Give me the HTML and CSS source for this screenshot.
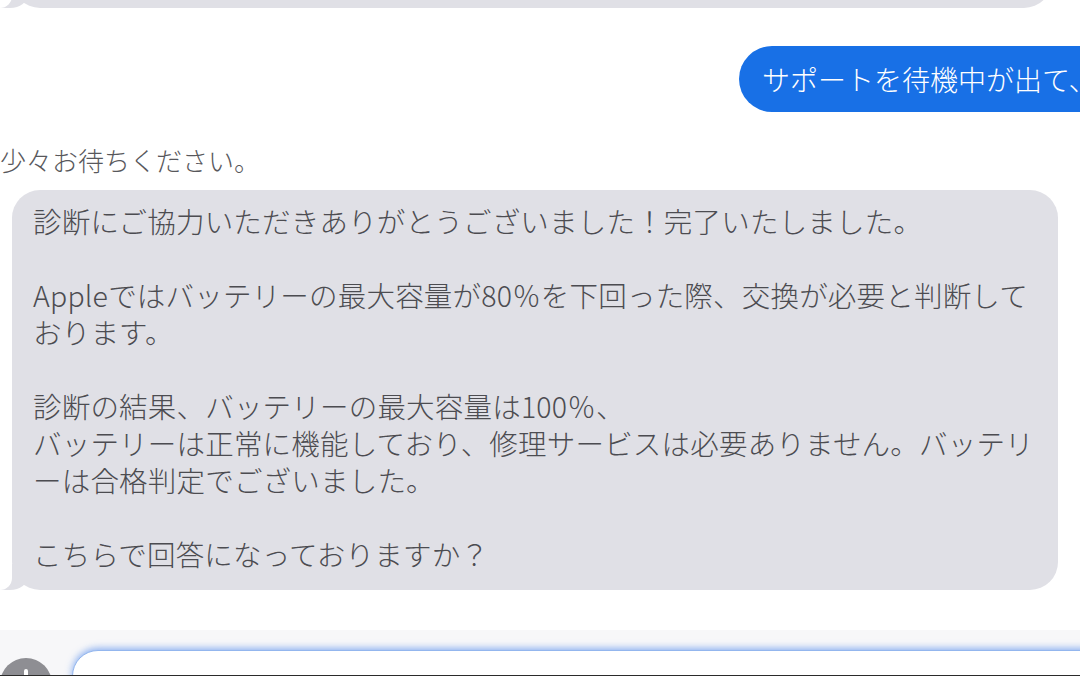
FILE: index.html
```html
<!DOCTYPE html>
<html lang="ja">
<head>
  <meta charset="UTF-8">
  <title>チャット</title>
  <link rel="stylesheet" href="styles.css">
</head>
<body>

<div class="page">
  <div class="bubble bubble-in bubble-prev"></div>

  <div class="out-row">
    <div class="bubble-out">サポートを待機中が出て、</div>
  </div>

  <div class="agent-note">少々お待ちください。</div>

  <div class="bubble bubble-in bubble-main">
    <p>診断にご協力いただきありがとうございました！完了いたしました。</p>
    <p>Appleではバッテリーの最大容量が80％を下回った際、交換が必要と判断して<br>おります。</p>
    <p>診断の結果、バッテリーの最大容量は100％、<br>バッテリーは正常に機能しており、修理サービスは必要ありません。バッテリ<br>ーは合格判定でございました。</p>
    <p>こちらで回答になっておりますか？</p>
  </div>

  <div class="composer">
    <div class="plus-btn">
      <svg width="52" height="52" viewBox="0 0 52 52">
        <circle cx="26" cy="26" r="26" fill="#8e8e93"/>
        <path d="M26 13 V39 M13 26 H39" stroke="#fff" stroke-width="4" stroke-linecap="round"/>
      </svg>
    </div>
    <div class="input-box"></div>
  </div>
</div>

</body>
</html>
```

FILE: styles.css
```css
body {
  margin: 0;
  background: #fff;
  font-family: "Noto Sans CJK JP", "Noto Sans", sans-serif;
}

.page {
  width: 1080px;
  height: 676px;
  overflow: hidden;
  box-sizing: border-box;
  border-bottom: 1px solid #2b2b2b;
}

/* incoming bubbles */
.bubble {
  position: relative;
}

.bubble-in {
  background: #e0e0e6;
  border-radius: 28px;
}

.bubble-in::before {
  content: "";
  position: absolute;
  bottom: 0;
  left: -12px;
  width: 28px;
  height: 26px;
  background: #e0e0e6;
  border-bottom-right-radius: 18px 14px;
}

.bubble-in::after {
  content: "";
  position: absolute;
  bottom: 0;
  left: -30px;
  width: 30px;
  height: 26px;
  background: #fff;
  border-bottom-right-radius: 12px;
}

.bubble-prev {
  margin: -52px 28px 0 12px;
  height: 60px;
}

.out-row {
  margin-top: 38px;
  padding-left: 739px;
  white-space: nowrap;
}

.bubble-out {
  display: inline-block;
  background: #1870e6;
  color: #fff;
  font-size: 28px;
  font-weight: 300;
  line-height: 38px;
  padding: 14px 30px 14px 23px;
  border-radius: 33px;
}

.agent-note {
  margin: 30px 0 13px 0;
  font-size: 26px;
  font-weight: 300;
  line-height: 35px;
  color: #58585c;
}

.bubble-main {
  margin-left: 12px;
  width: 1046px;
  box-sizing: border-box;
  padding: 12px 0 18px 21px;
  font-size: 28.5px;
  font-weight: 300;
  letter-spacing: 0.2px;
  line-height: 37px;
  color: #4c4c51;
  white-space: nowrap;
}

.bubble-main p {
  margin: 0 0 37px 0;
}

.bubble-main p:last-child {
  margin-bottom: 0;
}

/* message composer */
.composer {
  margin-top: 40px;
  height: 60px;
  padding-top: 20px;
  background: #f7f7f9;
  display: flex;
  align-items: flex-start;
}

.plus-btn {
  margin-top: 8px;
  width: 52px;
  height: 52px;
  flex-shrink: 0;
}

.input-box {
  margin-left: 20px;
  margin-right: -40px;
  flex: 1;
  height: 60px;
  background: #fff;
  border: 1px solid #93b6ee;
  border-radius: 26px 0 0 0;
  box-shadow: 0 -2px 7px rgba(70, 130, 235, 0.6);
}
```
